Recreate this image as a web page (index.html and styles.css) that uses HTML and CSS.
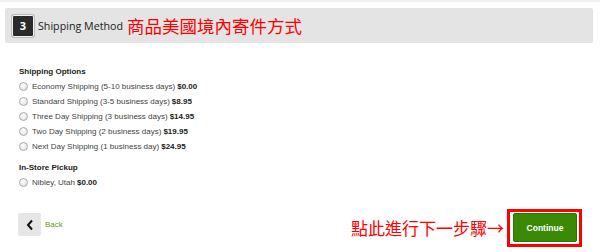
FILE: index.html
```html
<!DOCTYPE html>
<html>
<head>
<meta charset="utf-8">
<link rel="stylesheet" href="styles.css">
</head>
<body>
<div class="topline"></div>
<div class="step-header">
  <span class="badge">3</span>
  <span class="step-title">Shipping Method</span>
  <span class="note-title">商品美國境內寄件方式</span>
</div>
<div class="content">
  <div class="group-label">Shipping Options</div>
  <ul class="options">
    <li><span class="radio"></span>Economy Shipping (5-10 business days) <b>$0.00</b></li>
    <li><span class="radio"></span>Standard Shipping (3-5 business days) <b>$8.95</b></li>
    <li><span class="radio"></span>Three Day Shipping (3 business days) <b>$14.95</b></li>
    <li><span class="radio"></span>Two Day Shipping (2 business days) <b>$19.95</b></li>
    <li><span class="radio"></span>Next Day Shipping (1 business day) <b>$24.95</b></li>
  </ul>
  <div class="group-label second">In-Store Pickup</div>
  <ul class="options">
    <li><span class="radio"></span>Nibley, Utah <b>$0.00</b></li>
  </ul>
</div>
<div class="footer">
  <div class="back">
    <span class="back-btn"><svg width="10" height="12" viewBox="0 0 10 12"><path d="M7 1.5 L3 6 L7 10.5" fill="none" stroke="#111" stroke-width="2"/></svg></span>
    <span class="back-text">Back</span>
  </div>
  <div class="next">
    <span class="note-next">點此進行下一步驟→</span>
    <div class="highlight"><span class="continue">Continue</span></div>
  </div>
</div>
</body>
</html>
```
FILE: styles.css
```css
html, body {
  margin: 0;
  padding: 0;
  background: #fff;
  width: 600px;
  height: 252px;
  overflow: hidden;
  font-family: "Liberation Sans", Arial, sans-serif;
}
.topline {
  height: 2px;
  background: #f2f2f2;
}
.step-header {
  margin: 6px 7px 0 5px;
  height: 35px;
  background: #e4e4e4;
  border-radius: 2px;
  display: flex;
  align-items: center;
  padding-left: 7px;
}
.badge {
  width: 20px;
  height: 20px;
  background: #2a2a2a;
  border: 1px solid #f2f2f2;
  box-shadow: 0 0 0 1px #bbb;
  border-radius: 2px;
  color: #fff;
  font-family: "Open Sans", sans-serif;
  font-weight: 700;
  font-size: 11px;
  display: flex;
  align-items: center;
  justify-content: center;
}
.step-title {
  margin-left: 4px;
  font-family: "Open Sans", sans-serif;
  font-size: 10.7px;
  color: #222;
}
.note-title {
  margin-left: 4px;
  font-family: "Noto Sans CJK TC", sans-serif;
  font-size: 17.5px;
  color: #ff0000;
  line-height: 20px;
}
.content {
  padding-left: 19px;
  margin-top: 24px;
  font-size: 8px;
  color: #444;
}
.group-label {
  font-weight: 700;
  line-height: 10px;
  color: #222;
  margin-bottom: 2px;
}
.group-label.second {
  margin-top: 9px;
}
.options {
  list-style: none;
  margin: 0;
  padding: 0;
}
.options li {
  height: 15px;
  display: flex;
  align-items: center;
}
.options b {
  margin-left: 2px;
  color: #222;
}
.radio {
  width: 7px;
  height: 7px;
  border-radius: 50%;
  border: 1px solid #aaa;
  background: radial-gradient(circle at 40% 35%, #fff, #dcdcdc);
  margin-right: 4px;
}
.footer {
  margin-top: 19px;
  padding: 0 18px;
  height: 38px;
  display: flex;
  justify-content: space-between;
}
.back {
  display: flex;
  align-items: center;
  margin-top: 4px;
  align-self: flex-start;
}
.back-btn {
  width: 23px;
  height: 23px;
  background: #e6e6e6;
  border-radius: 2px;
  display: flex;
  align-items: center;
  justify-content: center;
}
.back-text {
  margin-left: 4px;
  font-size: 8px;
  color: #5e9a25;
}
.next {
  display: flex;
  align-items: center;
}
.note-next {
  font-family: "Noto Sans CJK TC", sans-serif;
  font-size: 17px;
  color: #ff0000;
  margin-right: 3px;
  line-height: 20px;
}
.highlight {
  border: 3px solid #ff0000;
  padding: 1px 2px 2px 3px;
}
.continue {
  width: 62px;
  height: 27px;
  background: #3a8a06;
  border: 1px solid #2e6e03;
  border-radius: 2px;
  color: #fff;
  font-weight: 700;
  font-size: 8.5px;
  display: flex;
  align-items: center;
  justify-content: center;
}
```
